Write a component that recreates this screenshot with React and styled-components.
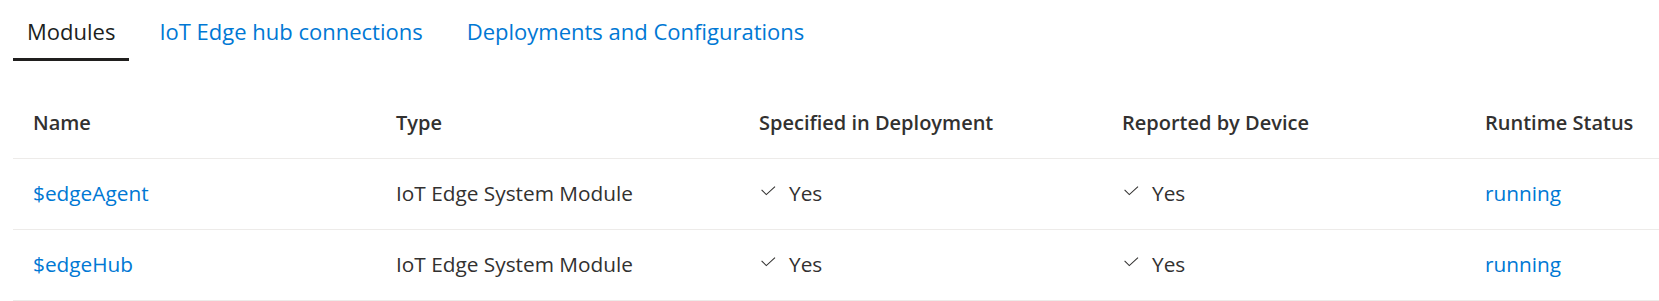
import React from "react";
import styled, { createGlobalStyle } from "styled-components";

const GlobalStyle = createGlobalStyle`
  html, body {
    margin: 0;
    padding: 0;
    background: #ffffff;
    overflow: hidden;
  }
  body {
    font-family: "Open Sans", "Noto Sans", sans-serif;
    color: #323130;
  }
`;

const modules = [
  { name: "$edgeAgent", type: "IoT Edge System Module", specified: true, reported: true, status: "running" },
  { name: "$edgeHub", type: "IoT Edge System Module", specified: true, reported: true, status: "running" },
];

const columns = ["Name", "Type", "Specified in Deployment", "Reported by Device", "Runtime Status"];

const CheckIcon = () => (
  <svg width="15" height="10" viewBox="0 0 15 10" fill="none">
    <path d="M0.6 3.9 L5.3 8.6 L14 0.6" stroke="#323130" strokeWidth="1.05" />
  </svg>
);

const YesMark = () => (
  <Check>
    <CheckIcon />
    Yes
  </Check>
);

const App = () => {
  return (
    <Page>
      <GlobalStyle />
      <TabBar>
        <Tab $active>Modules</Tab>
        <Tab>IoT Edge hub connections</Tab>
        <Tab>Deployments and Configurations</Tab>
      </TabBar>
      <TableScroller>
        <Table>
          <HeaderRow>
            {columns.map((c) => (
              <HeaderCell key={c}>{c}</HeaderCell>
            ))}
          </HeaderRow>
          {modules.map((m) => (
            <Row key={m.name}>
              <Cell>
                <Link href="#">{m.name}</Link>
              </Cell>
              <Cell>{m.type}</Cell>
              <Cell>{m.specified ? <YesMark /> : null}</Cell>
              <Cell>{m.reported ? <YesMark /> : null}</Cell>
              <Cell>
                <Link href="#">{m.status}</Link>
              </Cell>
            </Row>
          ))}
        </Table>
      </TableScroller>
    </Page>
  );
};

const Page = styled.div`
  padding-left: 13px;
`;

const TabBar = styled.div`
  display: flex;
  gap: 16px;
`;

const Tab = styled.button`
  border: none;
  background: none;
  font-family: inherit;
  font-size: 22px;
  line-height: 28px;
  padding: 17px 14px 13px;
  border-bottom: 3px solid ${(p) => (p.$active ? "#201f1e" : "transparent")};
  color: ${(p) => (p.$active ? "#201f1e" : "#0078d4")};
  cursor: pointer;
`;

const TableScroller = styled.div`
  margin-top: 20px;
  overflow: hidden;
`;

const Table = styled.div`
  width: 1815px;
  font-size: 20.8px;
  line-height: 28px;
`;

const rowGrid = `
  display: grid;
  grid-template-columns: repeat(5, 363px);
  border-bottom: 1px solid #edebe9;
`;

const HeaderRow = styled.div`
  ${rowGrid}
`;

const Row = styled.div`
  ${rowGrid}
`;

const HeaderCell = styled.div`
  padding: 28px 20px 21px;
  font-size: 20px;
  font-weight: 600;
  color: #323130;
  white-space: nowrap;
`;

const Cell = styled.div`
  height: 28px;
  padding: 20px 20px 22px;
  color: #323130;
  white-space: nowrap;
`;

const Link = styled.a`
  color: #0078d4;
  text-decoration: none;
`;

const Check = styled.span`
  padding-left: 2px;
  svg {
    vertical-align: 5px;
    margin-right: 13px;
  }
`;

export default App;
